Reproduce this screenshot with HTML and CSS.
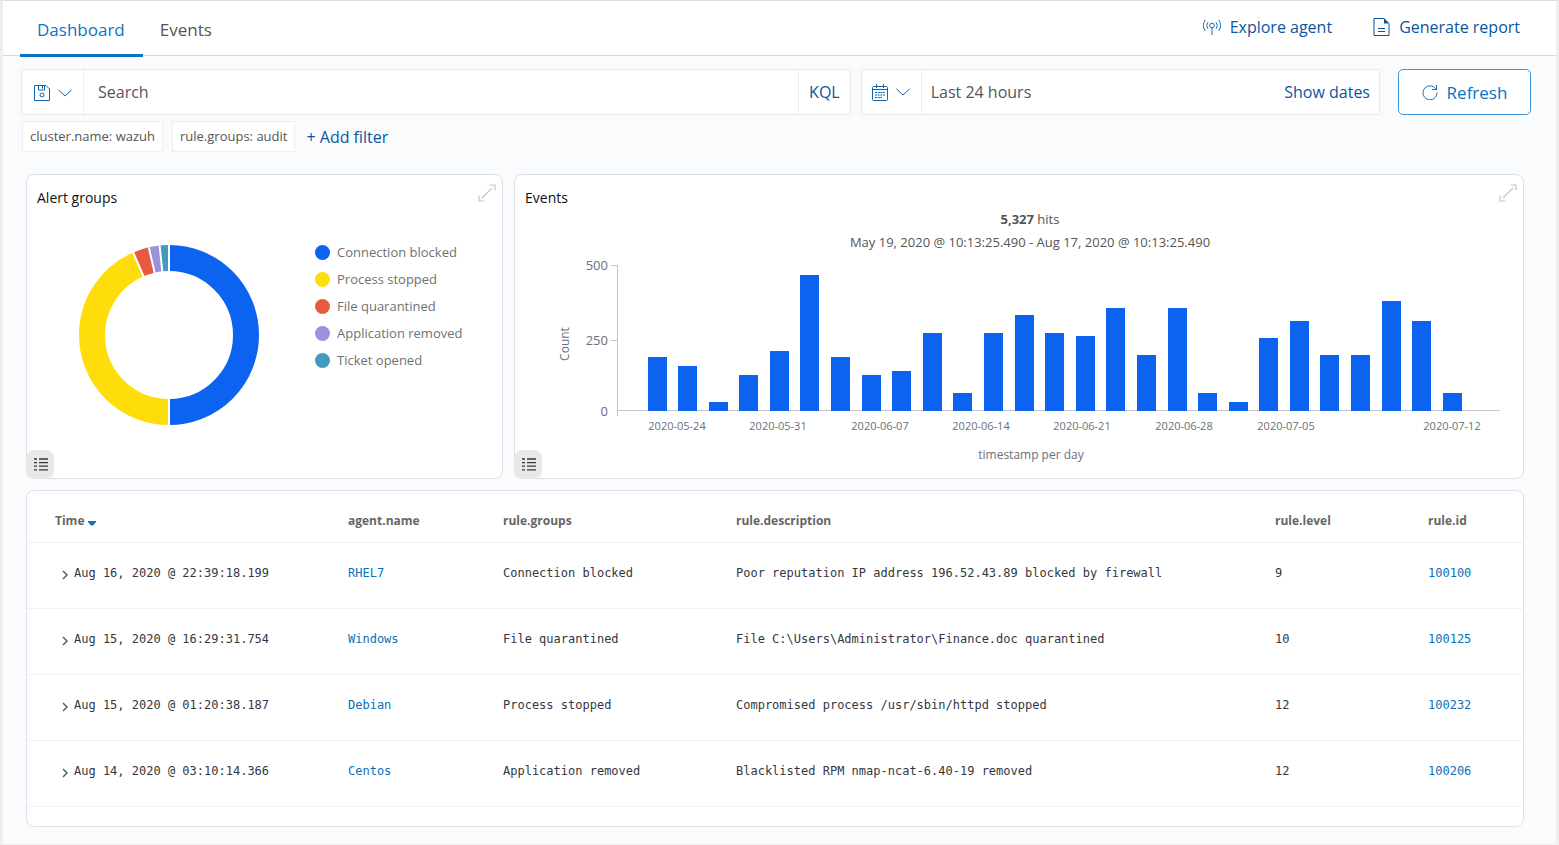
FILE: index.html
```html
<!DOCTYPE html>
<html lang="en">
<head>
    <meta charset="UTF-8">
    <meta name="viewport" content="width=device-width, initial-scale=1.0">
    <title>Dashboard</title>
    <link rel="stylesheet" href="styles.css">
</head>
<body>
    <header class="topbar">
        <nav class="tabs">
            <a class="tab active" href="#dashboard">Dashboard</a>
            <a class="tab" href="#events">Events</a>
        </nav>
        <div class="actions">
            <a class="action" href="#agent">
                <svg width="18" height="18" viewBox="0 0 18 18" fill="none" stroke="currentColor" stroke-width=".9">
                    <circle cx="9" cy="7.5" r="2.3"/>
                    <path d="M9 9.800V17M4.900 4.200a5.500 5.500 0 0 0 0 6.600M13.100 4.200a5.500 5.500 0 0 1 0 6.600M2.300 2a9.500 9.500 0 0 0 0 11M15.700 2a9.500 9.500 0 0 1 0 11"/>
                </svg>
                Explore agent
            </a>
            <a class="action" href="#report">
                <svg width="17" height="18" viewBox="0 0 17 18" fill="none" stroke="currentColor">
                    <path d="M11 .5H1v17h15V5.500"/>
                    <path d="M11 0v5.500h5.500z" fill="currentColor" stroke="none"/>
                    <path d="M5 10.500h7M5 13.500h7"/>
                </svg>
                Generate report
            </a>
        </div>
    </header>

    <main>
        <form class="toolbar">
            <div class="search-box">
                <button type="button" class="picker" aria-label="Saved queries">
                    <svg width="16" height="16" viewBox="0 0 16 16" fill="none" stroke="currentColor">
                        <path d="M.5.5h11.500l3.500 3.500v11.500H.5zM4.500.5v4.500h6V.5M8.500 1v2.500"/>
                        <circle cx="8" cy="10" r="2"/>
                    </svg>
                    <svg width="14" height="8" viewBox="0 0 14 8" fill="none" stroke="currentColor">
                        <path d="M.5 1L7 7l6.500-6"/>
                    </svg>
                </button>
                <input type="text" class="search-input" placeholder="Search" aria-label="Search">
                <button type="button" class="kql">KQL</button>
            </div>
            <div class="date-box">
                <button type="button" class="picker" aria-label="Quick dates">
                    <svg width="16" height="17" viewBox="0 0 16 17" fill="none" stroke="currentColor">
                        <rect x=".5" y="2.500" width="15" height="14" rx="1"/>
                        <path d="M.5 5.500h15M4.500 0v4M11.500 0v4"/>
                        <path d="M3 8.500h10M3 11h10M3 13.500h7" stroke-dasharray="2 .7"/>
                    </svg>
                    <svg width="14" height="8" viewBox="0 0 14 8" fill="none" stroke="currentColor">
                        <path d="M.5 1L7 7l6.500-6"/>
                    </svg>
                </button>
                <span class="date-range">Last 24 hours</span>
                <button type="button" class="show-dates">Show dates</button>
            </div>
            <button type="button" class="refresh">
                <svg width="16" height="16" viewBox="0 0 16 16" fill="none" stroke="currentColor">
                    <path d="M14.500 6.200A7 7 0 1 0 15 8.500M14.500 1v4.500H10"/>
                </svg>
                Refresh
            </button>
        </form>

        <div class="filters">
            <span class="filter">cluster.name: wazuh</span>
            <span class="filter">rule.groups: audit</span>
            <button type="button" class="add-filter">+ Add filter</button>
        </div>

        <div class="panels">
            <section class="panel">
                <h2>Alert groups</h2>
                <button type="button" class="expand" aria-label="Expand">
                    <svg width="18" height="18" viewBox="0 0 18 18" fill="none" stroke="currentColor">
                        <path d="M11.500 1H17v5.500M14 4L4 14M1 11.500V17h5.500" stroke-width="1.200"/>
                    </svg>
                </button>
                <div class="groups">
                    <svg class="donut" width="180" height="180" viewBox="0 0 180 180">
                        <g fill="none" stroke-width="26" transform="rotate(-90 90 90)">
                            <circle cx="90" cy="90" r="77" pathLength="360" stroke="#0c63f0" stroke-dasharray="180 180"/>
                            <circle cx="90" cy="90" r="77" pathLength="360" stroke="#ffdd0b" stroke-dasharray="157 203" stroke-dashoffset="-180"/>
                            <circle cx="90" cy="90" r="77" pathLength="360" stroke="#e75c41" stroke-dasharray="10 350" stroke-dashoffset="-337"/>
                            <circle cx="90" cy="90" r="77" pathLength="360" stroke="#9a92dc" stroke-dasharray="7 353" stroke-dashoffset="-347"/>
                            <circle cx="90" cy="90" r="77" pathLength="360" stroke="#4399c0" stroke-dasharray="6 354" stroke-dashoffset="-354"/>
                        </g>
                        <!-- gaps between slices -->
                        <g stroke="#fff" stroke-width="2">
                            <path d="M90 0v30"/>
                            <path d="M90 150v30"/>
                            <path d="M90 0v30" transform="rotate(-23.500 90 90)"/>
                            <path d="M90 0v30" transform="rotate(-13 90 90)"/>
                            <path d="M90 0v30" transform="rotate(-6 90 90)"/>
                        </g>
                    </svg>
                    <ul class="legend">
                        <li><span class="dot blue"></span>Connection blocked</li>
                        <li><span class="dot yellow"></span>Process stopped</li>
                        <li><span class="dot red"></span>File quarantined</li>
                        <li><span class="dot purple"></span>Application removed</li>
                        <li><span class="dot teal"></span>Ticket opened</li>
                    </ul>
                </div>
                <button type="button" class="toggle" aria-label="Toggle legend">
                    <svg width="14" height="13" viewBox="0 0 14 13" stroke="currentColor" stroke-width="1.300">
                        <path d="M0 1h3M0 4.600h3M0 8.200h3M0 11.800h3M5 1h9M5 4.600h9M5 8.200h9M5 11.800h9"/>
                    </svg>
                </button>
            </section>

            <section class="panel">
                <h2>Events</h2>
                <button type="button" class="expand" aria-label="Expand">
                    <svg width="18" height="18" viewBox="0 0 18 18" fill="none" stroke="currentColor">
                        <path d="M11.500 1H17v5.500M14 4L4 14M1 11.500V17h5.500" stroke-width="1.200"/>
                    </svg>
                </button>
                <p class="hits"><strong>5,327</strong> hits</p>
                <p class="range">May 19, 2020 @ 10:13:25.490 - Aug 17, 2020 @ 10:13:25.490</p>
                <svg class="histogram" viewBox="0 0 1008 210">
                    <path class="axis" d="M96 9.500h6.500V160M96 84.500h6M102 154.500h883"/>
                    <g class="bars">
                        <rect x="133" y="101" width="19" height="54"/>
                        <rect x="163" y="110" width="19" height="45"/>
                        <rect x="194" y="146" width="19" height="9"/>
                        <rect x="224" y="119" width="19" height="36"/>
                        <rect x="255" y="95" width="19" height="60"/>
                        <rect x="285" y="19" width="19" height="136"/>
                        <rect x="316" y="101" width="19" height="54"/>
                        <rect x="347" y="119" width="19" height="36"/>
                        <rect x="377" y="115" width="19" height="40"/>
                        <rect x="408" y="77" width="19" height="78"/>
                        <rect x="438" y="137" width="19" height="18"/>
                        <rect x="469" y="77" width="19" height="78"/>
                        <rect x="500" y="59" width="19" height="96"/>
                        <rect x="530" y="77" width="19" height="78"/>
                        <rect x="561" y="80" width="19" height="75"/>
                        <rect x="591" y="52" width="19" height="103"/>
                        <rect x="622" y="99" width="19" height="56"/>
                        <rect x="653" y="52" width="19" height="103"/>
                        <rect x="683" y="137" width="19" height="18"/>
                        <rect x="714" y="146" width="19" height="9"/>
                        <rect x="744" y="82" width="19" height="73"/>
                        <rect x="775" y="65" width="19" height="90"/>
                        <rect x="805" y="99" width="19" height="56"/>
                        <rect x="836" y="99" width="19" height="56"/>
                        <rect x="867" y="45" width="19" height="110"/>
                        <rect x="897" y="65" width="19" height="90"/>
                        <rect x="928" y="137" width="19" height="18"/>
                    </g>
                    <g class="y-labels">
                        <text x="93" y="14">500</text>
                        <text x="93" y="89">250</text>
                        <text x="93" y="160">0</text>
                    </g>
                    <g class="x-labels">
                        <text x="162" y="174">2020-05-24</text>
                        <text x="263" y="174">2020-05-31</text>
                        <text x="365" y="174">2020-06-07</text>
                        <text x="466" y="174">2020-06-14</text>
                        <text x="567" y="174">2020-06-21</text>
                        <text x="669" y="174">2020-06-28</text>
                        <text x="771" y="174">2020-07-05</text>
                        <text x="937" y="174">2020-07-12</text>
                    </g>
                    <text class="axis-title" x="516" y="203">timestamp per day</text>
                    <text class="axis-title" transform="translate(54 88) rotate(-90)">Count</text>
                </svg>
                <button type="button" class="toggle" aria-label="Toggle legend">
                    <svg width="14" height="13" viewBox="0 0 14 13" stroke="currentColor" stroke-width="1.300">
                        <path d="M0 1h3M0 4.600h3M0 8.200h3M0 11.800h3M5 1h9M5 4.600h9M5 8.200h9M5 11.800h9"/>
                    </svg>
                </button>
            </section>
        </div>

        <section class="events">
            <table>
                <colgroup>
                    <col class="col-time">
                    <col class="col-agent">
                    <col class="col-groups">
                    <col>
                    <col class="col-level">
                    <col class="col-id">
                </colgroup>
                <thead>
                    <tr>
                        <th>Time <svg width="8" height="5" viewBox="0 0 8 5"><path d="M0 0h8v1L5 4.500H3L0 1z" fill="#0a75bd"/></svg></th>
                        <th>agent.name</th>
                        <th>rule.groups</th>
                        <th>rule.description</th>
                        <th>rule.level</th>
                        <th>rule.id</th>
                    </tr>
                </thead>
                <tbody>
                    <tr>
                        <td><svg class="chevron" width="6" height="10" viewBox="0 0 6 10"><path d="M1 1l4 4-4 4"/></svg>Aug 16, 2020 @ 22:39:18.199</td>
                        <td><a href="#rhel7">RHEL7</a></td>
                        <td>Connection blocked</td>
                        <td>Poor reputation IP address 196.52.43.89 blocked by firewall</td>
                        <td>9</td>
                        <td><a href="#100100">100100</a></td>
                    </tr>
                    <tr>
                        <td><svg class="chevron" width="6" height="10" viewBox="0 0 6 10"><path d="M1 1l4 4-4 4"/></svg>Aug 15, 2020 @ 16:29:31.754</td>
                        <td><a href="#windows">Windows</a></td>
                        <td>File quarantined</td>
                        <td>File C:\Users\Administrator\Finance.doc quarantined</td>
                        <td>10</td>
                        <td><a href="#100125">100125</a></td>
                    </tr>
                    <tr>
                        <td><svg class="chevron" width="6" height="10" viewBox="0 0 6 10"><path d="M1 1l4 4-4 4"/></svg>Aug 15, 2020 @ 01:20:38.187</td>
                        <td><a href="#debian">Debian</a></td>
                        <td>Process stopped</td>
                        <td>Compromised process /usr/sbin/httpd stopped</td>
                        <td>12</td>
                        <td><a href="#100232">100232</a></td>
                    </tr>
                    <tr>
                        <td><svg class="chevron" width="6" height="10" viewBox="0 0 6 10"><path d="M1 1l4 4-4 4"/></svg>Aug 14, 2020 @ 03:10:14.366</td>
                        <td><a href="#centos">Centos</a></td>
                        <td>Application removed</td>
                        <td>Blacklisted RPM nmap-ncat-6.40-19 removed</td>
                        <td>12</td>
                        <td><a href="#100206">100206</a></td>
                    </tr>
                </tbody>
            </table>
        </section>
    </main>
</body>
</html>
```
FILE: styles.css
```css
* {
    box-sizing: border-box;
}

body {
    margin: 0;
    font-family: "Open Sans", "Noto Sans", sans-serif;
    font-size: 16px;
    color: #555;
    background: #fafbfd;
    border: 3px solid #eee;
    border-top: 1px solid #ddd;
    border-bottom: 1px solid #f0f0f2;
}

button {
    font: inherit;
    color: #0a55a0;
    background: none;
    border: none;
    padding: 0;
    cursor: pointer;
}

a {
    text-decoration: none;
}

svg {
    flex: none;
}

.topbar {
    display: flex;
    justify-content: space-between;
    height: 55px;
    padding: 0 36px 0 17px;
    background: #fff;
    border-bottom: 1px solid #d9dadc;
}

.tabs,
.actions {
    display: flex;
}

.tab {
    height: 56px;
    padding: 0 18px 0 17px;
    font-size: 17px;
    line-height: 58px;
    color: #555;
}

.tab.active {
    color: #0a75c2;
    border-bottom: 3px solid #0a75c2;
}

.actions {
    gap: 41px;
}

.action {
    display: flex;
    align-items: center;
    gap: 9px;
    height: 51px;
    color: #0a55a0;
}

.toolbar {
    display: flex;
    padding: 13px 25px 0 18px;
}

.search-box,
.date-box {
    display: flex;
    height: 46px;
    background: #fff;
    border: 1px solid #e8eaec;
    border-radius: 2px;
}

.search-box {
    flex: 8 1 0;
    margin-right: 10px;
}

.date-box {
    flex: 5 1 0;
    margin-right: 18px;
    align-items: center;
}

.picker {
    display: flex;
    align-items: center;
    align-self: stretch;
    gap: 8px;
    padding: 2px 11px 0 12px;
    color: #0a66b4;
    border-right: 1px solid #eceef0;
}

.date-box .picker {
    padding: 0 11px 0 10px;
}

.search-input {
    flex: 1;
    min-width: 0;
    padding: 0 14px;
    font: inherit;
    color: #555;
    background: none;
    border: none;
}

.search-input::placeholder {
    color: #555;
    opacity: 1;
}

.kql {
    padding: 0 10px;
    border-left: 1px solid #eceef0;
}

.date-range {
    flex: 1;
    padding-left: 9px;
}

.show-dates {
    padding-right: 9px;
}

.refresh {
    display: flex;
    align-items: center;
    justify-content: center;
    gap: 9px;
    width: 133px;
    height: 46px;
    font-size: 17px;
    color: #0a70c0;
    background: #fff;
    border: 1px solid #3d94d6;
    border-radius: 5px;
}

.filters {
    display: flex;
    align-items: center;
    gap: 9px;
    padding: 6px 19px 0;
}

.filter {
    height: 31px;
    padding: 0 7px;
    font-size: 13px;
    line-height: 29px;
    background: #fff;
    border: 1px solid #eceef0;
}

.add-filter {
    padding-left: 2px;
}

.panels {
    display: grid;
    grid-template-columns: 477fr 1010fr;
    gap: 11px;
    padding: 22px 32px 0 23px;
}

.panel {
    position: relative;
    min-height: 305px;
    background: #fff;
    border: 1px solid #dbe0eb;
    border-radius: 8px;
}

.panel h2 {
    margin: 13px 10px 0;
    font-size: 14px;
    font-weight: 400;
    line-height: 20px;
    color: #111;
}

.expand {
    position: absolute;
    top: 9px;
    right: 6px;
    color: #c4c4c4;
}

.expand svg,
.toggle svg {
    display: block;
}

.toggle {
    position: absolute;
    left: -1px;
    bottom: -1px;
    padding: 8px 6px 8px 8px;
    color: #343741;
    background: #e8e8e8;
    border-radius: 8px;
}

.groups {
    display: flex;
    padding: 31px 10px 0 52px;
}

.donut {
    margin-top: 6px;
}

.legend {
    margin: 0 0 0 56px;
    padding: 0;
    list-style: none;
    font-size: 13px;
    line-height: 27px;
    color: #717171;
}

.legend li {
    display: flex;
    align-items: center;
    gap: 7px;
}

.dot {
    width: 15px;
    height: 15px;
    border-radius: 50%;
}

.blue { background: #0c63f0; }
.yellow { background: #ffdd0b; }
.red { background: #e75c41; }
.purple { background: #9a92dc; }
.teal { background: #4399c0; }

.hits,
.range {
    margin: 0;
    padding-left: 22px;
    font-size: 13px;
    line-height: 23px;
    text-align: center;
}

.histogram {
    display: block;
    width: 100%;
    margin-top: 2px;
}

.histogram text {
    fill: #69707d;
}

.axis {
    fill: none;
    stroke: #c4c6ca;
}

.bars {
    fill: #0c63f0;
}

.y-labels {
    font-size: 13px;
    text-anchor: end;
}

.x-labels {
    font-size: 11px;
    text-anchor: middle;
}

.axis-title {
    font-size: 12px;
    text-anchor: middle;
}

.events {
    margin: 11px 32px 17px 23px;
    padding-bottom: 19px;
    background: #fff;
    border: 1px solid #dbe0eb;
    border-radius: 8px;
}

table {
    width: 100%;
    table-layout: fixed;
    border-spacing: 0;
    text-align: left;
}

.col-time { width: 321px; }
.col-agent { width: 155px; }
.col-groups { width: 233px; }
.col-level { width: 153px; }
.col-id { width: 95px; }

th {
    height: 52px;
    padding: 8px 0 0;
    font-size: 12px;
    color: #666;
    border-bottom: 1px solid #eff0f2;
}

td {
    height: 66px;
    padding: 0 0 6px;
    font-family: "DejaVu Sans Mono", monospace;
    font-size: 12px;
    color: #343741;
    border-bottom: 1px solid #f1f2f4;
}

th:first-child {
    padding-left: 28px;
}

th svg {
    vertical-align: -1px;
}

td:first-child {
    padding-left: 35px;
}

td a {
    color: #0a70b8;
}

.chevron {
    margin-right: 6px;
    vertical-align: -3px;
    fill: none;
    stroke: #555b68;
    stroke-width: 1.5;
}
```
